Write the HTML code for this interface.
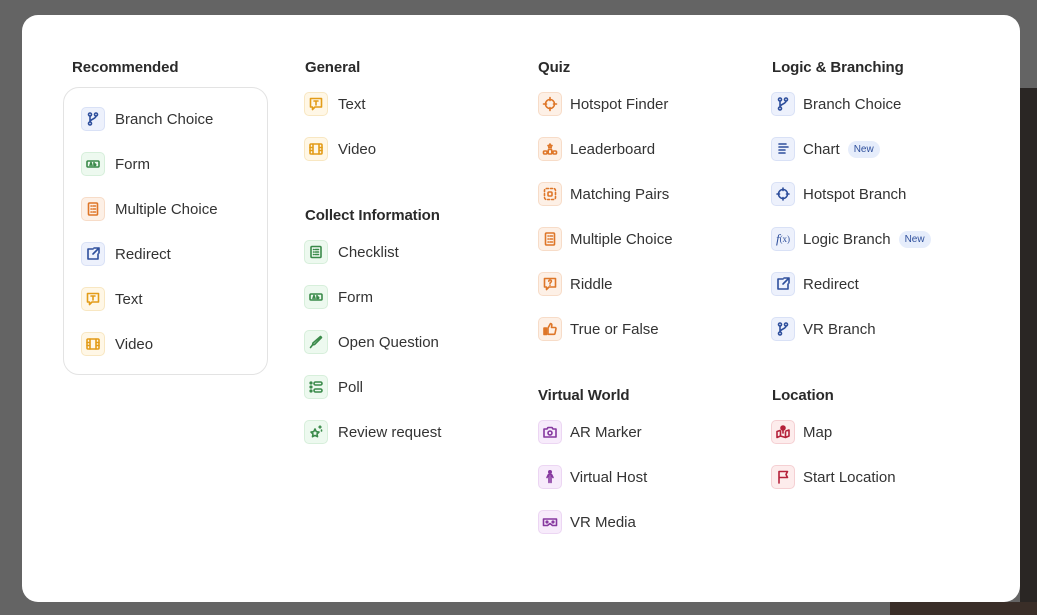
<!DOCTYPE html>
<html><head><meta charset="utf-8"><style>
*{box-sizing:border-box;margin:0;padding:0}
body{width:1037px;height:615px;overflow:hidden;background:#646464;font-family:"Liberation Sans",sans-serif;position:relative}
.dark{position:absolute;left:1020px;top:88px;width:17px;height:527px;background:#2a2624}
.dark2{position:absolute;left:890px;top:602px;width:147px;height:13px;background:#3a2e28}
.modal{position:absolute;left:22px;top:15px;width:998px;height:587px;background:#fff;border-radius:16px}
.h{position:absolute;font-size:15px;font-weight:bold;color:#2a2a2a;letter-spacing:-.1px;margin-top:1px}
.it{position:absolute;height:24px;display:flex;align-items:center;font-size:15px;color:#333;margin-top:1px}
.ic{width:24px;height:24px;border-radius:5px;border:1px solid;display:flex;align-items:center;justify-content:center;margin-right:10px;flex:none}
.q .ic{margin-right:8px}
.ic svg{width:16px;height:16px;fill:none;stroke-width:1.6;stroke-linecap:round;stroke-linejoin:round}
.b{background:#edf1fc;border-color:#d9e1f6}.b svg{stroke:#2e4f9c}
.g{background:#edf9ef;border-color:#d7efdb}.g svg{stroke:#3a8a4a}
.o{background:#fdf0e6;border-color:#f7dcc8}.o svg{stroke:#de7628}
.y{background:#fff7e6;border-color:#f8e7c2}.y svg{stroke:#e39c18}
.p{background:#f7ebfb;border-color:#ecd6f3}.p svg{stroke:#86389f}
.r{background:#fdecec;border-color:#f5d0d3}.r svg{stroke:#b5213a}
.new{margin-left:8px;background:#e6edfb;color:#2e4f9c;font-size:10px;padding:3px 6px;border-radius:9px}
.box{position:absolute;left:41px;top:72px;width:205px;height:288px;border:1px solid #e3e3e3;border-radius:16px}
</style></head><body>
<div class="dark"></div><div class="dark2"></div>
<div class="modal">
<div class="h" style="left:50px;top:43px">Recommended</div>
<div class="box"></div>
<div class="h" style="left:283px;top:43px">General</div>
<div class="h" style="left:283px;top:191px">Collect Information</div>
<div class="h" style="left:516px;top:43px">Quiz</div>
<div class="h" style="left:516px;top:371px">Virtual World</div>
<div class="h" style="left:750px;top:43px">Logic &amp; Branching</div>
<div class="h" style="left:750px;top:371px">Location</div>

<!-- Recommended -->
<div class="it" style="left:59px;top:91px"><span class="ic b"><svg viewBox="0 0 16 16"><circle cx="5" cy="3.5" r="1.5"/><circle cx="5" cy="12.5" r="1.5"/><circle cx="11" cy="3.5" r="1.5"/><path d="M5 5v6M11 5c0 3-6 3-6 6"/></svg></span>Branch Choice</div>
<div class="it" style="left:59px;top:136px"><span class="ic g"><svg viewBox="0 0 16 16"><rect x="2" y="5" width="12" height="6" rx="1"/><path d="M5 9.5l1-3 1 3M9 6.5v3h1.2a.8.8 0 000-1.5H9"/></svg></span>Form</div>
<div class="it" style="left:59px;top:181px"><span class="ic o"><svg viewBox="0 0 16 16"><rect x="3.5" y="2" width="9" height="12" rx="1"/><path d="M6 5h.5M8 5h2.5M6 8h.5M8 8h2.5M6 11h.5M8 11h2.5"/></svg></span>Multiple Choice</div>
<div class="it" style="left:59px;top:226px"><span class="ic b"><svg viewBox="0 0 16 16"><path d="M8 3H3v10h10V8M9 2h5v5M14 2L8 8"/></svg></span>Redirect</div>
<div class="it" style="left:59px;top:271px"><span class="ic y"><svg viewBox="0 0 16 16"><path d="M2.5 2.5h11v8.5H7l-2.5 2.5V11h-2z"/><path d="M6 5h4M8 5v4"/></svg></span>Text</div>
<div class="it" style="left:59px;top:316px"><span class="ic y"><svg viewBox="0 0 16 16"><rect x="2" y="3" width="12" height="10" rx="1"/><path d="M5 3v10M11 3v10M2 6.5h3M2 9.5h3M11 6.5h3M11 9.5h3"/></svg></span>Video</div>

<!-- General -->
<div class="it" style="left:282px;top:76px"><span class="ic y"><svg viewBox="0 0 16 16"><path d="M2.5 2.5h11v8.5H7l-2.5 2.5V11h-2z"/><path d="M6 5h4M8 5v4"/></svg></span>Text</div>
<div class="it" style="left:282px;top:121px"><span class="ic y"><svg viewBox="0 0 16 16"><rect x="2" y="3" width="12" height="10" rx="1"/><path d="M5 3v10M11 3v10M2 6.5h3M2 9.5h3M11 6.5h3M11 9.5h3"/></svg></span>Video</div>

<!-- Collect -->
<div class="it" style="left:282px;top:224px"><span class="ic g"><svg viewBox="0 0 16 16"><rect x="3" y="2.5" width="10" height="11" rx="1"/><path d="M5.5 5.5h.5M7.5 5.5h3M5.5 8h.5M7.5 8h3M5.5 10.5h.5M7.5 10.5h3"/></svg></span>Checklist</div>
<div class="it" style="left:282px;top:269px"><span class="ic g"><svg viewBox="0 0 16 16"><rect x="2" y="5" width="12" height="6" rx="1"/><path d="M5 9.5l1-3 1 3M9 6.5v3h1.2a.8.8 0 000-1.5H9"/></svg></span>Form</div>
<div class="it" style="left:282px;top:314px"><span class="ic g"><svg viewBox="0 0 16 16"><path d="M12.5 2.5l1 1-7 7-2 .5.5-2z M4.5 11l-2 2.5"/></svg></span>Open Question</div>
<div class="it" style="left:282px;top:359px"><span class="ic g"><svg viewBox="0 0 16 16"><circle cx="3" cy="4" r=".8"/><circle cx="3" cy="8" r=".8"/><circle cx="3" cy="12" r=".8"/><rect x="6" y="3" width="8" height="3" rx="1.5"/><rect x="6" y="10" width="8" height="3" rx="1.5"/></svg></span>Poll</div>
<div class="it" style="left:282px;top:404px"><span class="ic g"><svg viewBox="0 0 16 16"><path d="M7 5l1.3 2.7 2.7.4-2 1.9.5 2.7L7 11.4 4.5 12.7l.5-2.7-2-1.9 2.7-.4z"/><path d="M12 2v2M11 3h2M13.5 6v1"/></svg></span>Review request</div>

<div class="q">
<!-- Quiz -->
<div class="it" style="left:516px;top:76px"><span class="ic o"><svg viewBox="0 0 16 16"><circle cx="8" cy="8" r="4.5"/><path d="M8 1.5v3M8 11.5v3M1.5 8h3M11.5 8h3"/></svg></span>Hotspot Finder</div>
<div class="it" style="left:516px;top:121px"><span class="ic o"><svg viewBox="0 0 16 16"><rect x="1.5" y="10" width="3.5" height="3" rx="1"/><rect x="6.2" y="8.5" width="3.6" height="4.5" rx="1"/><rect x="11" y="10" width="3.5" height="3" rx="1"/><path d="M8 3l.6 1.3 1.4.2-1 1 .2 1.4L8 6.2 6.8 6.9 7 5.5l-1-1 1.4-.2z"/></svg></span>Leaderboard</div>
<div class="it" style="left:516px;top:166px"><span class="ic o"><svg viewBox="0 0 16 16"><rect x="2.5" y="2.5" width="11" height="11" rx="2" stroke-dasharray="2 2"/><rect x="6" y="6" width="4" height="4" rx="1"/></svg></span>Matching Pairs</div>
<div class="it" style="left:516px;top:211px"><span class="ic o"><svg viewBox="0 0 16 16"><rect x="3.5" y="2" width="9" height="12" rx="1"/><path d="M6 5h.5M8 5h2.5M6 8h.5M8 8h2.5M6 11h.5M8 11h2.5"/></svg></span>Multiple Choice</div>
<div class="it" style="left:516px;top:256px"><span class="ic o"><svg viewBox="0 0 16 16"><path d="M2.5 2.5h11v8.5H7l-2.5 2.5V11h-2z"/><path d="M6.8 5.2a1.3 1.3 0 112 1.1c-.6.3-.8.6-.8 1.2M8 9.2v.1"/></svg></span>Riddle</div>
<div class="it" style="left:516px;top:301px"><span class="ic o"><svg viewBox="0 0 16 16"><path d="M2 7h2.5v6.5H2z" fill="#de7628"/><path d="M6 7l2.5-4.5c1 0 1.5.8 1.3 1.8L9.5 6.5h3.5a1 1 0 011 1.2l-1 4.8a1 1 0 01-1 .8H6z"/></svg></span>True or False</div>

<!-- Virtual World -->
<div class="it" style="left:516px;top:404px"><span class="ic p"><svg viewBox="0 0 16 16"><path d="M2 5h3l1-1.5h4L11 5h3v8H2z"/><circle cx="8" cy="9" r="2"/></svg></span>AR Marker</div>
<div class="it" style="left:516px;top:449px"><span class="ic p"><svg viewBox="0 0 16 16"><circle cx="8" cy="3" r="1.2" fill="#86389f"/><path d="M5 8.5l1.5-3h3L11 8.5M7 5.5v8M9 5.5v8"/></svg></span>Virtual Host</div>
<div class="it" style="left:516px;top:494px"><span class="ic p"><svg viewBox="0 0 16 16"><path d="M1.5 5h13v6.5h-4L8 9.5l-2.5 2h-4z"/><circle cx="5" cy="8" r=".8"/><circle cx="11" cy="8" r=".8"/></svg></span>VR Media</div>

<!-- Logic -->
<div class="it" style="left:749px;top:76px"><span class="ic b"><svg viewBox="0 0 16 16"><circle cx="5" cy="3.5" r="1.5"/><circle cx="5" cy="12.5" r="1.5"/><circle cx="11" cy="3.5" r="1.5"/><path d="M5 5v6M11 5c0 3-6 3-6 6"/></svg></span>Branch Choice</div>
<div class="it" style="left:749px;top:121px"><span class="ic b"><svg viewBox="0 0 16 16"><path d="M4 3h7M4 6h9M4 9h6M4 12h6"/></svg></span>Chart<span class="new">New</span></div>
<div class="it" style="left:749px;top:166px"><span class="ic b"><svg viewBox="0 0 16 16"><circle cx="8" cy="8" r="4.5"/><path d="M8 2v2.5M8 11.5V14M2 8h2.5M11.5 8H14"/></svg></span>Hotspot Branch</div>
<div class="it" style="left:749px;top:211px"><span class="ic b" style="font-family:'Liberation Serif',serif;font-style:italic;font-size:13px;color:#2e4f9c">f<span style="font-style:normal;font-size:9px">(x)</span></span>Logic Branch<span class="new">New</span></div>
<div class="it" style="left:749px;top:256px"><span class="ic b"><svg viewBox="0 0 16 16"><path d="M8 3H3v10h10V8M9 2h5v5M14 2L8 8"/></svg></span>Redirect</div>
<div class="it" style="left:749px;top:301px"><span class="ic b"><svg viewBox="0 0 16 16"><circle cx="5" cy="3.5" r="1.5"/><circle cx="5" cy="12.5" r="1.5"/><circle cx="11" cy="3.5" r="1.5"/><path d="M5 5v6M11 5c0 3-6 3-6 6"/></svg></span>VR Branch</div>

<!-- Location -->
<div class="it" style="left:749px;top:404px"><span class="ic r"><svg viewBox="0 0 16 16"><path d="M5 6.5L2 7.5v6l3.5-1.5 5 1.5 3.5-1.5v-6L11 7M5.5 7v5M10.5 8v5"/><circle cx="8" cy="4" r="2" fill="#b5213a"/><path d="M8 6v3"/></svg></span>Map</div>
<div class="it" style="left:749px;top:449px"><span class="ic r"><svg viewBox="0 0 16 16"><path d="M4 14V2.5h8.5L11 5.5 12.5 8.5H4"/></svg></span>Start Location</div>
</div>
</div>
</body></html>
